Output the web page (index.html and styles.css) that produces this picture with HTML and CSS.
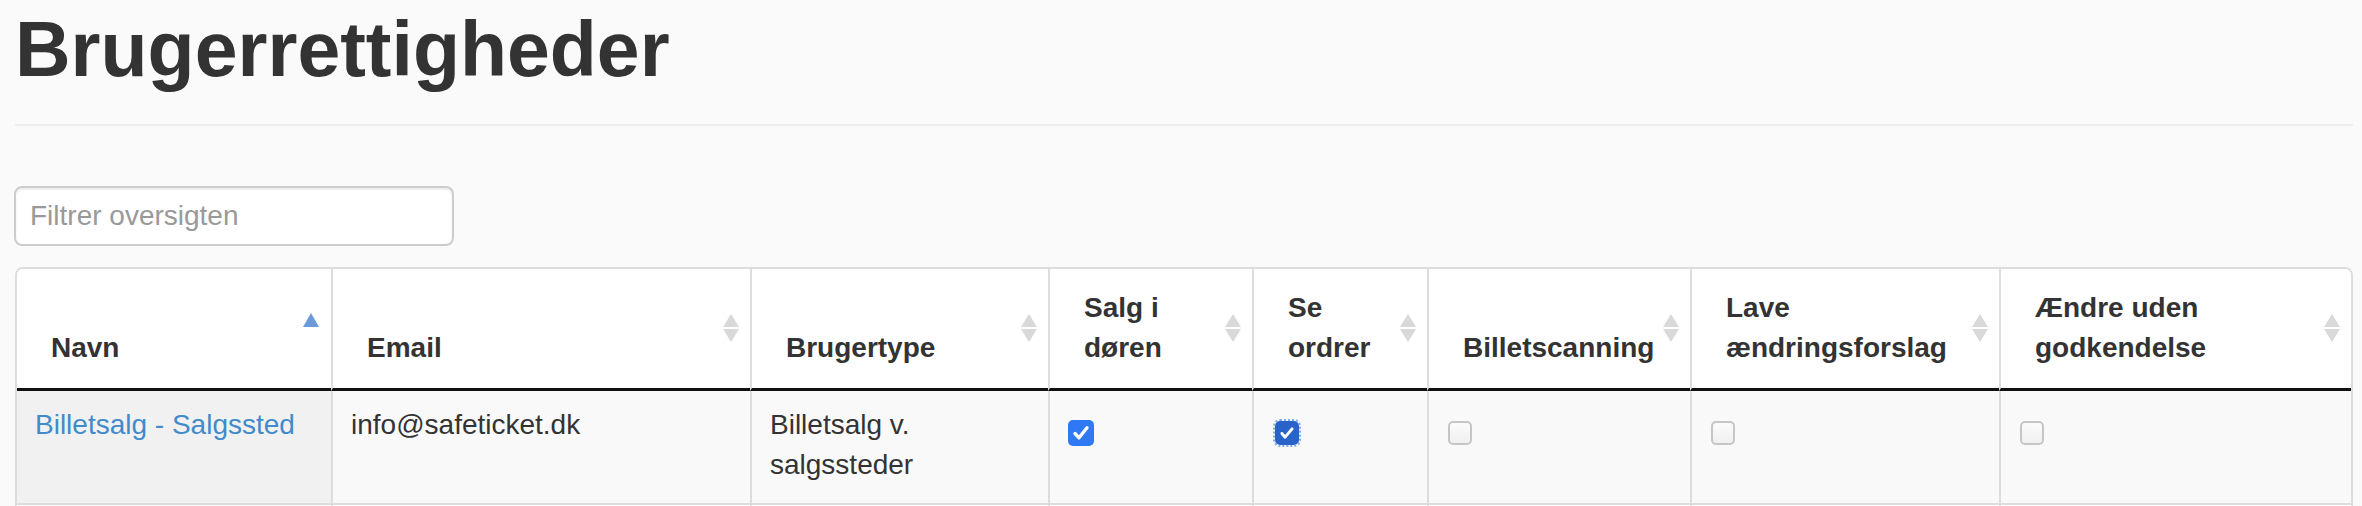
FILE: index.html
```html
<!DOCTYPE html>
<html lang="da">
<head>
<meta charset="utf-8">
<title>Brugerrettigheder</title>
<link rel="stylesheet" href="styles.css">
</head>
<body>
<div class="page">
  <div class="page-header">
    <h1>Brugerrettigheder</h1>
  </div>
  <input class="filter" type="text" placeholder="Filtrer oversigten">
  <table class="grid">
    <colgroup>
      <col class="w-navn"><col class="w-email"><col class="w-type"><col class="w-salg"><col class="w-se"><col class="w-scan"><col class="w-lave"><col class="w-aendre">
    </colgroup>
    <thead>
      <tr>
        <th class="sort-asc">Navn</th>
        <th class="sort-both">Email</th>
        <th class="sort-both">Brugertype</th>
        <th class="sort-both">Salg i døren</th>
        <th class="sort-both">Se ordrer</th>
        <th class="sort-both">Billetscanning</th>
        <th class="sort-both">Lave ændringsforslag</th>
        <th class="sort-both">Ændre uden godkendelse</th>
      </tr>
    </thead>
    <tbody>
      <tr>
        <td class="sorted"><a href="#">Billetsalg - Salgssted</a></td>
        <td>info@safeticket.dk</td>
        <td>Billetsalg v. salgssteder</td>
        <td><span class="cb checked"><svg viewBox="0 0 26 26" width="26" height="26"><path d="M7 13.5 L11 17.8 L19 7.8" fill="none" stroke="#fff" stroke-width="3.4" stroke-linecap="round" stroke-linejoin="round"/></svg></span></td>
        <td><span class="cb checked focused"><svg viewBox="0 0 26 26" width="26" height="26"><path d="M7.5 13.5 L11 17.5 L18.5 8.5" fill="none" stroke="#fff" stroke-width="3.2" stroke-linecap="round" stroke-linejoin="round"/></svg></span></td>
        <td><span class="cb"></span></td>
        <td><span class="cb"></span></td>
        <td><span class="cb"></span></td>
      </tr>
      <tr class="next">
        <td class="sorted"></td><td></td><td></td><td></td><td></td><td></td><td></td><td></td>
      </tr>
    </tbody>
  </table>
</div>
</body>
</html>
```

FILE: styles.css
```css
html, body {
  overflow: hidden;
}

body {
  margin: 0;
  padding: 0 9px 0 15px;
  background: #fafafa;
  font-family: "Liberation Sans", Arial, Helvetica, sans-serif;
  font-size: 28px;
  line-height: 40px;
  color: #333;
}

.page-header {
  padding: 7px 0 32px;
  border-bottom: 2px solid #eee;
}

.page-header h1 {
  margin: 0;
  font-size: 77px;
  line-height: 1.1;
  font-weight: bold;
  color: #333;
}

.filter {
  display: block;
  box-sizing: border-box;
  width: 440px;
  height: 60px;
  margin: 60px 0 0 -1px;
  padding: 0 14px;
  border: 2px solid #ccc;
  border-radius: 8px;
  background: #fff;
  box-shadow: inset 0 2px 2px rgba(0, 0, 0, 0.075);
  font-family: "Liberation Sans", Arial, Helvetica, sans-serif;
  font-size: 28px;
  color: #555;
  outline: none;
}

.filter::placeholder {
  color: #999;
}

.grid {
  margin-top: 21px;
  width: 2338px;
  table-layout: fixed;
  border-collapse: separate;
  border-spacing: 0;
  border: 2px solid #ddd;
  border-radius: 8px;
}

.w-navn { width: 314px; }
.w-email { width: 419px; }
.w-type { width: 298px; }
.w-salg { width: 204px; }
.w-se { width: 175px; }
.w-scan { width: 263px; }
.w-lave { width: 309px; }
.w-aendre { width: 352px; }

.grid th {
  position: relative;
  background: #fff;
  text-align: left;
  vertical-align: bottom;
  font-weight: bold;
  padding: 19px 30px 20px 34px;
  border-bottom: 3px solid #111;
  border-left: 2px solid #ddd;
}

.grid th:first-child {
  border-left: 0;
  border-top-left-radius: 6px;
}

.grid th:last-child {
  border-top-right-radius: 6px;
}

.sort-both::before,
.sort-both::after,
.sort-asc::before {
  content: "";
  position: absolute;
  right: 11px;
  width: 0;
  height: 0;
  border-left: 8.5px solid transparent;
  border-right: 8.5px solid transparent;
}

.sort-both::before {
  top: calc(50% - 14px);
  border-bottom: 13px solid #d9d9d9;
}

.sort-both::after {
  top: calc(50% + 1px);
  border-top: 13px solid #d9d9d9;
}

.sort-asc::before {
  top: calc(50% - 15px);
  right: 12px;
  border-left-width: 8px;
  border-right-width: 8px;
  border-bottom: 14px solid #6a9ad8;
}

.grid td {
  background: #f9f9f9;
  vertical-align: top;
  padding: 14px 18px 18px 18px;
  border-left: 2px solid #ddd;
  border-bottom: 2px solid #ddd;
}

.grid td:first-child {
  border-left: 0;
}

.grid td.sorted {
  background: #f1f1f1;
}

.grid tr.next td {
  height: 80px;
  background: #fff;
}

.grid tr.next td.sorted {
  background: #fafafa;
}

.grid a {
  color: #428bca;
  text-decoration: none;
}

.cb {
  display: block;
  box-sizing: border-box;
  width: 24px;
  height: 24px;
  margin: 16px 0 0 1px;
  border: 2px solid #c6c6c6;
  border-radius: 5px;
  background: linear-gradient(#fbfbfb, #f0f0f0);
}

.cb.checked {
  width: 26px;
  height: 26px;
  margin: 15px 0 0 0;
  border: 0;
  border-radius: 5px;
  background: #3079f4;
}

.cb svg {
  display: block;
}

.cb.focused {
  width: 24px;
  height: 24px;
  margin: 16px 0 0 3px;
  background: #2a63c8;
  outline: 2px dotted #7fa9ee;
  outline-offset: 0;
}

.cb.focused svg {
  width: 24px;
  height: 24px;
}
```
